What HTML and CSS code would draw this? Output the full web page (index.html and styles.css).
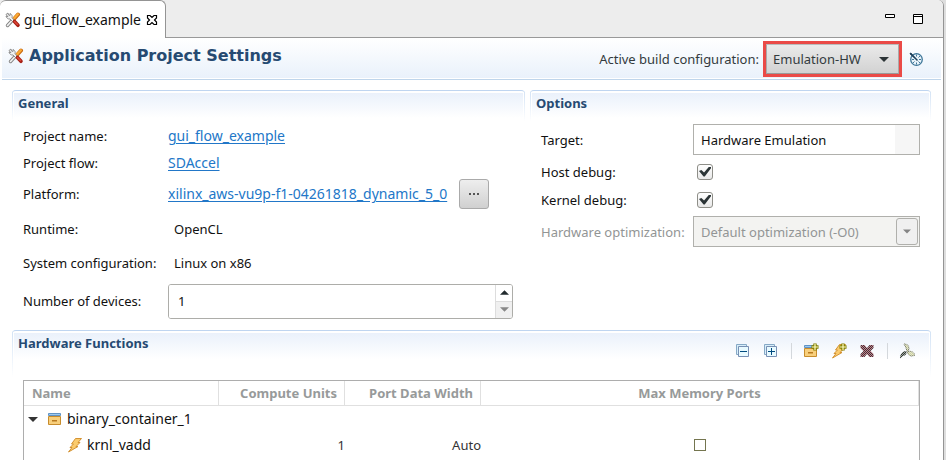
FILE: index.html
```html
<!DOCTYPE html>
<html lang="en">
<head>
<meta charset="utf-8">
<title>gui_flow_example</title>
<link rel="stylesheet" href="styles.css">
</head>
<body>
<svg class="defs" aria-hidden="true">
  <symbol id="tools" viewBox="0 0 16 16">
    <path d="M2.500 13.500 8 7.500" stroke="#858585" stroke-width="3.400" stroke-linecap="round"/>
    <path d="M2.500 13.500 8 7.500" stroke="#f4f4f4" stroke-width="1.600" stroke-linecap="round"/>
    <path d="m8.500 7.500 4.500-5" stroke="#c86a12" stroke-width="4" stroke-linecap="round"/>
    <path d="m8.500 7 4.300-4.700" stroke="#fbab35" stroke-width="2.400" stroke-linecap="round"/>
    <path d="M1 2.500 3 1l.5 2L5 3.500V1.500c2 1 2.500 2.500 2 4L9 8 7.500 9.500 5 7C3 7.300 1.300 6 1 4l2 .8z" fill="#f2f2f2" stroke="#858585" stroke-width=".9"/>
    <path d="m9.500 9.500 3.500 3.800" stroke="#a51e14" stroke-width="3.600" stroke-linecap="round"/>
    <path d="m9.500 9.500 3 3" stroke="#dc4637" stroke-width="1.600" stroke-linecap="round"/>
  </symbol>
  <symbol id="container" viewBox="0 0 16 16">
    <path d="M1.500 5.500h12v8h-12z" fill="#f8cf7c" stroke="#c78c2c"/>
    <path d="M1.500 2.500h12v2h-12z" fill="#9cc9ee" stroke="#5f92c4"/>
    <path d="M5 9h5v1.500H5z" fill="#b97a20"/>
  </symbol>
  <symbol id="bolt" viewBox="0 0 16 16">
    <path d="M8.500 1.500h6L11 5.500h2L9 9.500h2L1.500 15 5 10.500H3L6.500 7H4.500z" fill="#fbcb6d" stroke="#d49334"/>
  </symbol>
  <symbol id="plus-badge" viewBox="0 0 8 8">
    <path d="M4 0.500v7M.5 4h7" stroke="#827f00" stroke-width="3.400"/>
    <path d="M4 1v6M1 4h6" stroke="#fffdc0" stroke-width="1.200"/>
  </symbol>
  <pattern id="dither" width="2" height="2" patternUnits="userSpaceOnUse">
    <path d="M0 0h1v1H0zM1 1h1v1H1z" fill="#f4f8fc" fill-opacity=".55"/>
  </pattern>
  <pattern id="dark-dither" width="2" height="2" patternUnits="userSpaceOnUse">
    <path d="M0 0h2v2H0z" fill="#c9808a"/>
    <path d="M0 0h1v1H0zM1 1h1v1H1z" fill="#3c3438"/>
  </pattern>
</svg>

<div class="editor">
  <header class="tabs">
    <div class="tab">
      <svg class="icon"><use href="#tools"/></svg>
      <span class="name">gui_flow_example</span>
      <button class="plain close" aria-label="Close"><svg viewBox="0 0 12 12"><path d="M1.500 1.500h2.500L6 3.500l2-2h2.500V4l-2 2 2 2v2.500H8l-2-2-2 2H1.500V8l2-2-2-2z" fill="#fff" stroke="#000" stroke-width="1.200"/></svg></button>
    </div>
    <div class="window-buttons">
      <button class="plain" aria-label="Minimize"><svg viewBox="0 0 12 12"><path d="M1.500 1.500h9v3h-9z" fill="#fff" stroke="#000"/></svg></button>
      <button class="plain" aria-label="Maximize"><svg viewBox="0 0 12 12"><path d="M1.500 1.500h9v9h-9zM1 3.500h10" fill="#fff" stroke="#000"/></svg></button>
    </div>
  </header>

  <div class="form-head">
    <div class="title">
      <svg class="icon"><use href="#tools"/></svg>
      <h1>Application Project Settings</h1>
    </div>
    <label for="config">Active build configuration:</label>
    <div class="combo config">
      <select id="config"><option>Emulation-HW</option></select>
      <svg class="arrow" viewBox="0 0 10 5"><path d="M0 0h10L5 5z"/></svg>
    </div>
    <button class="plain gauge" aria-label="Build options"><svg viewBox="0 0 16 16">
      <circle cx="8.500" cy="8.500" r="5.800" fill="#e9f3fa" stroke="#3f7799" stroke-width="1.300"/>
      <path d="M8.500 3.500v2M13 8.500h-2M8.500 13.500v-2M4 8.500h2M12 5l-1.500 1.500M12 12l-1.500-1.500M5 12l1.500-1.500" stroke="#3f7799"/>
      <path d="m2 2 7.500 7.500" stroke="#1d3f58" stroke-width="1.400"/><path d="m2 3 6 5M3 2l5 6" stroke="#1d3f58" stroke-width=".8"/>
    </svg></button>
  </div>

  <main>
    <section class="panel">
      <h2>General</h2>
      <div class="fields general">
        <span>Project name:</span><a class="name" href="#">gui_flow_example</a>
        <span>Project flow:</span><a class="name" href="#">SDAccel</a>
        <span>Platform:</span>
        <div class="platform"><a class="name" href="#">xilinx_aws-vu9p-f1-04261818_dynamic_5_0</a><button class="browse" aria-label="Browse"><svg viewBox="0 0 10 2"><path d="M0 0h2v2H0zM4 0h2v2H4zM8 0h2v2H8z" fill="#555"/></svg></button></div>
        <span>Runtime:</span><span class="value">OpenCL</span>
        <span>System configuration:</span><span class="value">Linux on x86</span>
        <label for="devices">Number of devices:</label>
        <div class="spinner">
          <input id="devices" type="number" value="1">
          <div class="steps">
            <button aria-label="Increase"><svg viewBox="0 0 10 5"><path d="M0 5h10L5 0z" fill="#222b2e"/></svg></button>
            <button aria-label="Decrease" disabled><svg viewBox="0 0 10 5"><path d="M0 0h10L5 5z" fill="#888"/></svg></button>
          </div>
        </div>
      </div>
    </section>

    <section class="panel">
      <h2>Options</h2>
      <div class="fields options">
        <label for="target">Target:</label>
        <div class="combo target"><select id="target"><option>Hardware Emulation</option></select></div>
        <label for="host">Host debug:</label><input id="host" type="checkbox" checked>
        <label for="kernel">Kernel debug:</label><input id="kernel" type="checkbox" checked>
        <label for="opt" class="disabled">Hardware optimization:</label>
        <div class="combo opt"><select id="opt" disabled><option>Default optimization (-O0)</option></select>
          <span class="drop"><svg viewBox="0 0 10 5"><path d="M0 0h10L5 5z" fill="#858585"/></svg></span></div>
      </div>
    </section>

    <section class="panel functions">
      <div class="functions-head">
        <h2>Hardware Functions</h2>
        <div class="toolbar">
          <button class="plain" aria-label="Collapse all"><svg viewBox="0 0 16 16"><path d="M1.500 1.500h10v10h-10z" fill="#d8eefa" stroke="#86a9c6"/><path d="M3.500 3.500h10v10h-10z" fill="#e8faff" stroke="#7890b4"/><path d="M5 8.500h7" stroke="#004b80"/></svg></button>
          <button class="plain" aria-label="Expand all"><svg viewBox="0 0 16 16"><path d="M1.500 1.500h10v10h-10z" fill="#d8eefa" stroke="#86a9c6"/><path d="M3.500 3.500h10v10h-10z" fill="#e8faff" stroke="#7890b4"/><path d="M5 8.500h7M8.500 5v7" stroke="#004b80"/></svg></button>
          <i class="separator"></i>
          <button class="plain" aria-label="Add binary container"><svg viewBox="0 0 16 16"><use href="#container"/><use href="#plus-badge" x="8" y="0" width="8" height="8"/></svg></button>
          <button class="plain" aria-label="Add hardware function"><svg viewBox="0 0 16 16"><use href="#bolt"/><use href="#plus-badge" x="8" y="0" width="8" height="8"/></svg></button>
          <button class="plain" aria-label="Remove"><svg viewBox="0 0 16 16"><path d="M1.500 2h4L8 5l2.500-3h4v3l-3 3 3 3v3h-4L8 11l-2.500 3h-4v-3l3-3-3-3z" fill="url(#dark-dither)"/></svg></button>
          <i class="separator"></i>
          <button class="plain" aria-label="Build settings"><svg viewBox="0 0 16 16"><path d="M5 1c4.500 0 6 3 4 8C7 7 7.500 4 5 1zM8.500 9.500C11 7 14 8.500 16 12c-3 1.500-6.500 1.500-7.500-2.500z" fill="#cfd29c" stroke="#74765a"/><path d="M7.500 8C4 8 1 10.500 1 15.500l3-2.500c2.500-.5 4-2 3.500-5z" fill="#333b32"/><path d="M0 0h16v16H0z" fill="url(#dither)"/></svg></button>
        </div>
      </div>
      <div class="tree">
        <table>
          <colgroup><col class="c-name"><col class="c-units"><col class="c-width"><col></colgroup>
          <thead><tr><th>Name</th><th>Compute Units</th><th>Port Data Width</th><th>Max Memory Ports</th></tr></thead>
          <tbody>
            <tr><td><div class="node"><svg class="twisty" viewBox="0 0 10 5"><path d="M0 0h10L5 5z" fill="#333"/></svg><svg class="icon"><use href="#container"/></svg><span class="name">binary_container_1</span></div></td><td></td><td></td><td></td></tr>
            <tr><td><div class="node child"><svg class="icon"><use href="#bolt"/></svg><span class="name">krnl_vadd</span></div></td><td>1</td><td>Auto</td><td><input class="cell-check" type="checkbox" aria-label="Max Memory Ports"></td></tr>
          </tbody>
        </table>
      </div>
    </section>
  </main>
</div>
</body>
</html>
```
FILE: styles.css
```css
* { box-sizing: border-box; }
body {
  margin: 0;
  background: #dedede;
  color: #111;
  font: 13px/20px "Noto Sans", "Open Sans", sans-serif;
  overflow: hidden;
}
button, input, select { font: inherit; color: inherit; margin: 0; }
svg { display: block; fill: none; }
a { justify-self: start; color: #2277c8; text-decoration: underline; text-underline-offset: 2px; }
.name { font-size: 14px; }
.defs { position: absolute; width: 0; height: 0; }
.icon { width: 16px; height: 16px; flex: none; }
.plain { display: block; padding: 0; border: 0; background: none; }

.editor {
  min-height: 100vh;
  margin-right: 2px;
  border-right: 1px solid #949494;
  border-top-right-radius: 6px;
  background: #fff;
}

.tabs {
  display: flex;
  height: 38px;
  justify-content: space-between;
  background: linear-gradient(#999, #999) bottom / 100% 1px no-repeat #ededed;
  border-top-right-radius: 6px;
}
.tab {
  display: flex;
  align-items: center;
  gap: 3px;
  width: 166px;
  padding-left: 5px;
  background: #fff;
  border: 1px solid #949494;
  border-width: 1px 1px 0 0;
  border-radius: 6px 6px 0 0;
}
.close { width: 12px; margin-left: 2px; }
.window-buttons { display: flex; gap: 16px; padding: 13px 19px 0 0; }
.window-buttons button { width: 12px; height: 12px; }

.form-head {
  display: flex;
  align-items: center;
  height: 42px;
  margin: 0 2px;
  padding: 0 17px 0 6px;
  background: linear-gradient(#fff, #e9f1fb);
  border-bottom: 1px solid #bfd5eb;
  box-shadow: inset 0 -1px #fff;
  color: #333b3e;
}
.title { flex: 1; display: flex; align-items: center; gap: 5px; padding-bottom: 6px; }
h1, h2 { margin: 0; color: #264a72; font-weight: 700; }
h1 { font: 700 16px/20px "DejaVu Sans", sans-serif; }
h2 { font-size: 13px; line-height: 20px; }

.combo { position: relative; }
.combo select {
  display: block;
  width: 100%;
  height: 31px;
  padding: 0 7px;
  appearance: none;
  background: #fff;
  border: 1px solid #b0b0ac;
  border-radius: 0;
}
.config { width: 139px; margin: 0 6px 0 4px; padding: 3px; background: #ea4a47; }
.config select {
  height: 30px;
  padding: 0 6px;
  border-color: #bbb #aaa #999;
  background: linear-gradient(#eaeaea, #d2d2d2);
}
.arrow { position: absolute; right: 13px; top: 16px; width: 10px; fill: #2c3436; }
.gauge, .gauge svg { width: 16px; height: 16px; }

main {
  display: grid;
  grid-template-columns: 513fr 401fr;
  gap: 8px 5px;
  padding: 10px 12px 0;
}
.panel {
  padding: 2px 11px 0;
  border-top: 1px solid #bfd5f0;
  border-radius: 4px 4px 0 0;
  background:
    linear-gradient(#d2e2f5, #fff) 0 0 / 1px 30px no-repeat,
    linear-gradient(#d2e2f5, #fff) 100% 0 / 1px 30px no-repeat,
    linear-gradient(#eaf1fb, #fff) 2px 2px / calc(100% - 4px) 25px no-repeat;
}
.panel h2 { margin-left: -5px; }
.fields { display: grid; align-items: center; padding-top: 9px; }
.general {
  grid-template-columns: 145px 1fr;
  grid-template-rows: 27px 27px 36px 34px 34px 42px;
}
.options {
  grid-template-columns: 152px 1fr;
  grid-template-rows: 35px 29px 27px 37px;
}
.value { padding-left: 6px; }
.disabled { color: #929595; }
.platform { display: flex; align-items: center; gap: 12px; }
.browse {
  display: grid;
  place-items: center;
  width: 30px;
  height: 30px;
  padding: 0;
  border: 1px solid #aaa;
  border-radius: 3px;
  background: linear-gradient(#eee, #d0d0d0);
}
.browse svg { width: 10px; height: 2px; }
.spinner { display: flex; height: 35px; width: 345px; border: 1px solid #adada9; border-radius: 3px; overflow: hidden; }
.spinner input { flex: 1; min-width: 0; padding: 0 9px; border: 0; background: #fff; appearance: textfield; }
.spinner input::-webkit-inner-spin-button { appearance: none; }
.steps { display: grid; grid-template-rows: 1fr 1fr; width: 17px; border-left: 1px solid #ddd; }
.steps button { display: grid; place-items: center; padding: 0; border: 0; background: #fff; }
.steps button:disabled { background: #f0f0f0; border-top: 1px solid #ddd; }
.steps svg { width: 9px; height: 5px; }

.target select { background: linear-gradient(#f6f6f6, #f6f6f6) right / 24px 100% no-repeat #fff; color: #111; }
.opt select:disabled { background: #f3f3f1; color: #929595; opacity: 1; }
.drop {
  position: absolute;
  top: 2px;
  right: 2px;
  display: grid;
  place-items: center;
  width: 22px;
  height: 27px;
  border: 1px solid #b0b0ac;
  border-radius: 3px;
  background: #f0f0f0;
}
.drop svg { width: 8px; height: 5px; }
.options input {
  display: grid;
  place-items: center;
  width: 16px;
  height: 16px;
  margin-left: 4px;
  appearance: none;
  border: 1px solid #8e8e88;
  border-radius: 3px;
  background: linear-gradient(#fff, #e8e8e8);
}
.options input:checked::after {
  content: "";
  width: 12px;
  height: 10px;
  background: #2b3436;
  clip-path: polygon(0 45%, 20% 35%, 42% 60%, 85% 0, 100% 0, 100% 18%, 48% 100%, 38% 100%);
}

.functions { grid-column: 1 / -1; background-size: 1px 46px, 1px 46px, calc(100% - 4px) 26px; }
.functions-head { display: flex; justify-content: space-between; height: 47px; }
.toolbar { display: flex; align-items: flex-start; gap: 12px; padding: 10px 5px 0 0; }
.toolbar svg { width: 16px; height: 16px; }
.separator { width: 1px; height: 16px; margin-right: -1px; background: #d4d8dc; }

.tree { min-height: 100px; border: 1px solid #adadad; }
table {
  width: 100%;
  table-layout: fixed;
  border-collapse: separate;
  border-spacing: 0;
}
.c-name { width: 195px; }
.c-units { width: 126px; }
.c-width { width: 136px; }
th {
  height: 25px;
  padding: 0 7px;
  border: 1px solid #e0e0e0;
  border-width: 0 1px 1px 0;
  color: #979a9a;
  text-align: right;
}
th:first-child { text-align: left; padding-left: 8px; }
th:last-child { text-align: center; }
td { height: 26px; padding: 0; text-align: right; color: #333; }
td:last-child { text-align: center; }
.node { display: flex; align-items: center; gap: 4px; padding-left: 4px; color: #111; }
.twisty { width: 10px; height: 5px; margin-right: 5px; }
.child { padding-left: 43px; }
.cell-check { display: block; width: 12px; height: 12px; margin: 0 auto; appearance: none; border: 1px solid #74754f; background: #fff; }
```
